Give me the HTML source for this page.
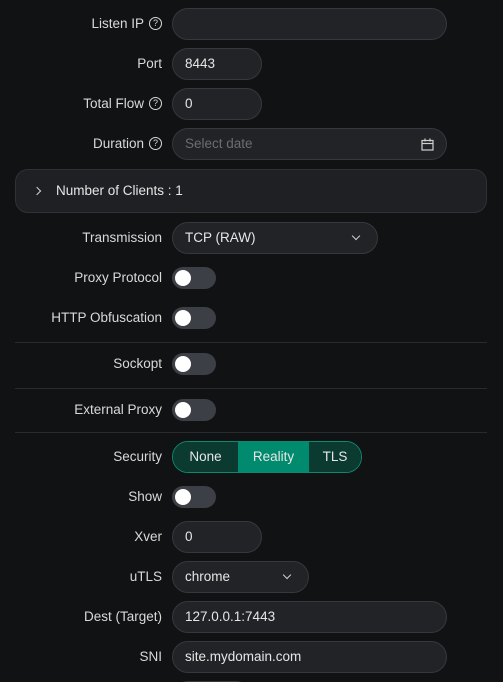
<!DOCTYPE html>
<html style="overflow:hidden;height:682px"><head><style>
*{box-sizing:border-box;margin:0;padding:0}
html,body{width:503px;height:682px;overflow:hidden}
body{background:#111214;font-family:"Liberation Sans",sans-serif;font-size:13.5px;color:#e6e6e6}
#w{position:relative;width:503px;height:682px;overflow:hidden}
.l{position:absolute;right:341px;height:32px;line-height:32px;white-space:nowrap;color:#d9d9d9;text-align:right}
.q{display:inline-block;width:13px;height:13px;border:1px solid #d9d9d9;border-radius:50%;font-size:9px;line-height:11px;text-align:center;vertical-align:middle;margin-left:5px;position:relative;top:-1px}
.i{position:absolute;left:172px;height:32px;border:1px solid #36383d;background:#222327;border-radius:16px;padding-left:12px;line-height:30px;color:#e6e6e6}
.t{position:absolute;left:172px;width:44px;height:22px;border-radius:11px;background:#3d3f47}
.t:after{content:"";position:absolute;left:3px;top:3px;width:16px;height:16px;border-radius:50%;background:#fff}
.hr{position:absolute;left:15px;width:472px;height:1px;background:#2a2b2f}
.chev{position:absolute;top:10px;width:6px;height:6px;border-right:1.2px solid #cfcfcf;border-bottom:1.2px solid #cfcfcf;transform:rotate(45deg)}
</style></head><body><div id="w">
<div class="l" style="top:8px">Listen IP<span class="q">?</span></div>
<div class="i" style="top:8px;width:275px"></div>
<div class="l" style="top:48px">Port</div>
<div class="i" style="top:48px;width:90px">8443</div>
<div class="l" style="top:88px">Total Flow<span class="q">?</span></div>
<div class="i" style="top:88px;width:90px">0</div>
<div class="l" style="top:128px">Duration<span class="q">?</span></div>
<div class="i" style="top:128px;width:275px;color:#6b6d72">Select date
<svg style="position:absolute;right:12px;top:9px" width="13" height="13" viewBox="0 0 13 13" fill="none" stroke="#d0d0d0" stroke-width="1.2"><rect x="1" y="2.5" width="11" height="9.5"/><line x1="1" y1="5.5" x2="12" y2="5.5"/><line x1="4" y1="0.5" x2="4" y2="3.5"/><line x1="9" y1="0.5" x2="9" y2="3.5"/></svg></div>
<div style="position:absolute;left:15px;top:169px;width:472px;height:44px;border:1px solid #303135;background:#1f2023;border-radius:13px;line-height:42px;padding-left:40px;color:#e6e6e6">Number of Clients : 1
<span style="position:absolute;left:18px;top:18px;width:6px;height:6px;border-right:1.2px solid #cfcfcf;border-top:1.2px solid #cfcfcf;transform:rotate(45deg)"></span></div>
<div class="l" style="top:222px">Transmission</div>
<div class="i" style="top:222px;width:206px">TCP (RAW)<span class="chev" style="right:18px"></span></div>
<div class="l" style="top:262px">Proxy Protocol</div><div class="t" style="top:267px"></div>
<div class="l" style="top:302px">HTTP Obfuscation</div><div class="t" style="top:307px"></div>
<div class="hr" style="top:342px"></div>
<div class="l" style="top:348px">Sockopt</div><div class="t" style="top:353px"></div>
<div class="hr" style="top:388px"></div>
<div class="l" style="top:394px">External Proxy</div><div class="t" style="top:399px"></div>
<div class="hr" style="top:432px"></div>
<div class="l" style="top:441px">Security</div>
<div style="position:absolute;left:172px;top:441px;width:190px;height:32px;border:1px solid #0d8a6e;border-radius:16px;overflow:hidden;display:flex;line-height:30px;color:#e6e6e6">
<div style="width:65px;text-align:center;background:#0b3a31">None</div>
<div style="width:71px;text-align:center;background:#008a6e">Reality</div>
<div style="flex:1;text-align:center;background:#0b3a31">TLS</div></div>
<div class="l" style="top:481px">Show</div><div class="t" style="top:486px"></div>
<div class="l" style="top:521px">Xver</div>
<div class="i" style="top:521px;width:90px">0</div>
<div class="l" style="top:561px">uTLS</div>
<div class="i" style="top:561px;width:137px">chrome<span class="chev" style="right:18px"></span></div>
<div class="l" style="top:601px">Dest (Target)</div>
<div class="i" style="top:601px;width:275px">127.0.0.1:7443</div>
<div class="l" style="top:641px">SNI</div>
<div class="i" style="top:641px;width:275px">site.mydomain.com</div>
<div class="i" style="top:681px;width:80px"></div>
</div></body></html>
